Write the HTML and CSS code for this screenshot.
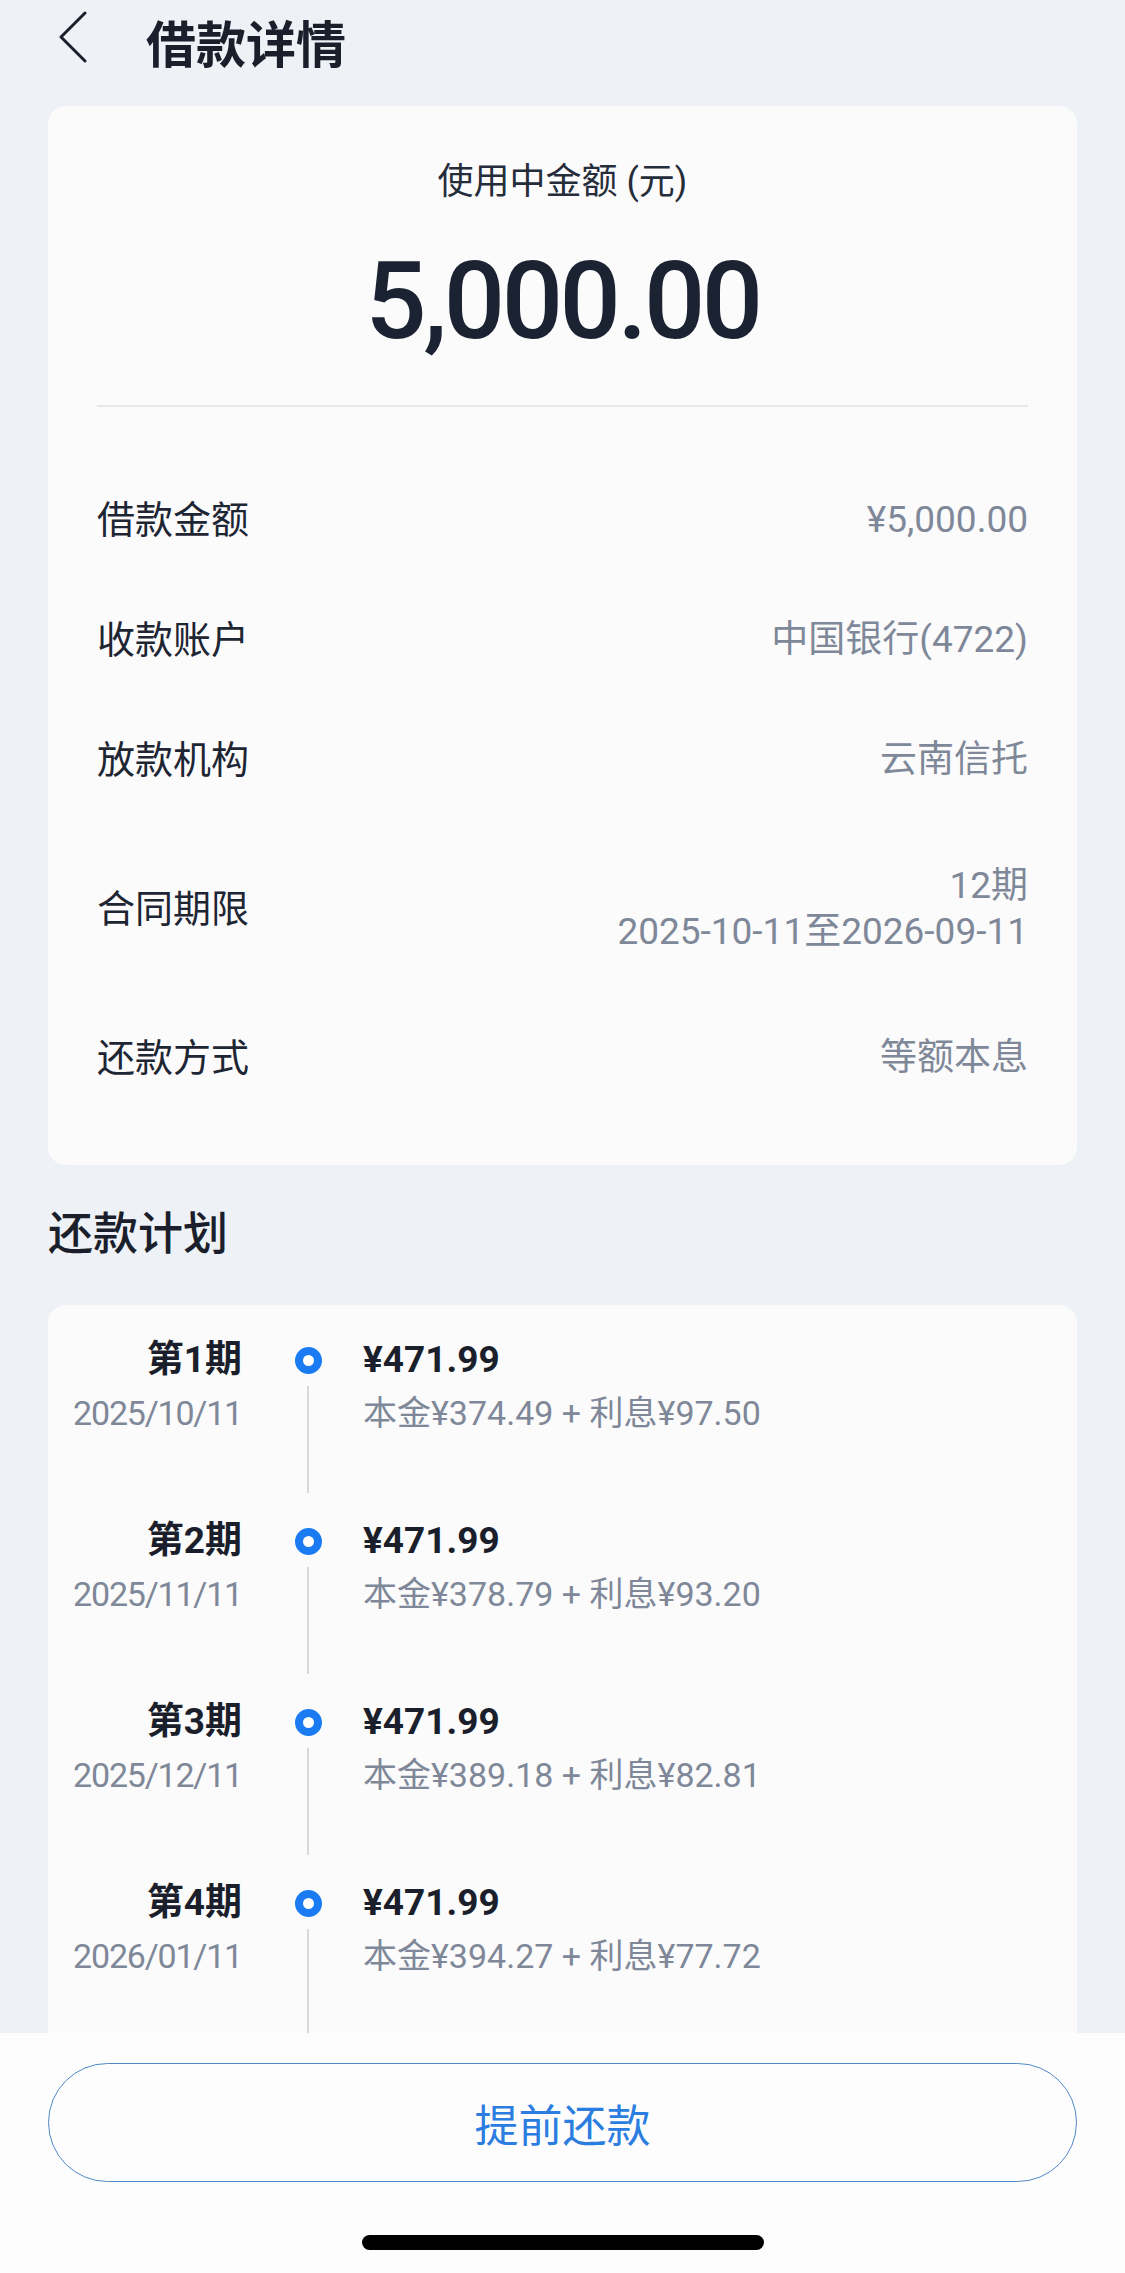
FILE: index.html
```
<!DOCTYPE html>
<html lang="zh-CN">
<head>
  <meta charset="UTF-8" />
  <meta name="viewport" content="width=device-width, initial-scale=1.0"/>
  <title>借款详情</title>
  <link rel="stylesheet" href="styles.css">
</head>
<body>
  <div class="topbar">
    <svg class="back" width="30" height="52" viewBox="0 0 30 52">
      <path d="M27 2 L3 26 L27 50" fill="none" stroke="#1a1f2b" stroke-width="3" stroke-linecap="round" stroke-linejoin="round"/>
    </svg>
    <h1>借款详情</h1>
  </div>

  <div class="card summary">
    <p class="summary-label">使用中金额 (元)</p>
    <p class="summary-amount">5,000.00</p>
    <div class="divider"></div>

    <div class="info-list">
      <div class="info-row">
        <span class="info-label">借款金额</span>
        <span class="info-value">¥5,000.00</span>
      </div>
      <div class="info-row">
        <span class="info-label">收款账户</span>
        <span class="info-value">中国银行(4722)</span>
      </div>
      <div class="info-row">
        <span class="info-label">放款机构</span>
        <span class="info-value">云南信托</span>
      </div>
      <div class="info-row info-row-tall">
        <span class="info-label">合同期限</span>
        <span class="info-value">12期<br>2025-10-11至2026-09-11</span>
      </div>
      <div class="info-row">
        <span class="info-label">还款方式</span>
        <span class="info-value">等额本息</span>
      </div>
    </div>
  </div>

  <h2 class="section-title">还款计划</h2>

  <div class="card plan">
    <div class="plan-item">
      <div class="period">
        <div class="period-no">第1期</div>
        <div class="period-date">2025/10/11</div>
      </div>
      <div class="axis"><span class="dot"></span><span class="axis-line"></span></div>
      <div class="detail">
        <div class="amount">¥471.99</div>
        <div class="breakdown">本金¥374.49 + 利息¥97.50</div>
      </div>
    </div>
    <div class="plan-item">
      <div class="period">
        <div class="period-no">第2期</div>
        <div class="period-date">2025/11/11</div>
      </div>
      <div class="axis"><span class="dot"></span><span class="axis-line"></span></div>
      <div class="detail">
        <div class="amount">¥471.99</div>
        <div class="breakdown">本金¥378.79 + 利息¥93.20</div>
      </div>
    </div>
    <div class="plan-item">
      <div class="period">
        <div class="period-no">第3期</div>
        <div class="period-date">2025/12/11</div>
      </div>
      <div class="axis"><span class="dot"></span><span class="axis-line"></span></div>
      <div class="detail">
        <div class="amount">¥471.99</div>
        <div class="breakdown">本金¥389.18 + 利息¥82.81</div>
      </div>
    </div>
    <div class="plan-item">
      <div class="period">
        <div class="period-no">第4期</div>
        <div class="period-date">2026/01/11</div>
      </div>
      <div class="axis"><span class="dot"></span><span class="axis-line"></span></div>
      <div class="detail">
        <div class="amount">¥471.99</div>
        <div class="breakdown">本金¥394.27 + 利息¥77.72</div>
      </div>
    </div>
  </div>

  <div class="footer">
    <button class="repay-btn">提前还款</button>
    <div class="home-bar"></div>
  </div>
</body>
</html>
```

FILE: styles.css
```
body {
  margin: 0;
  padding-bottom: 240px;
  background: #eef1f6;
  font-family: Roboto, "Noto Sans CJK SC", sans-serif;
  color: #1e2533;
}
p, h1, h2 {
  margin: 0;
}

.topbar {
  display: flex;
  align-items: center;
  height: 82px;
  padding-left: 58px;
  margin-bottom: 24px;
}
.back {
  margin-bottom: 8px;
}
.topbar h1 {
  margin-left: 58px;
  font-size: 50px;
  font-weight: 700;
  color: #1a1f2b;
}

.card {
  margin: 0 48px;
  background: #fbfbfc;
  border-radius: 18px;
}
.summary {
  padding: 51px 49px 47px;
}
.summary-label {
  text-align: center;
  font-size: 36px;
  line-height: 50px;
  color: #262d3a;
}
.summary-amount {
  margin-top: 34px;
  text-align: center;
  font-size: 108px;
  font-weight: 500;
  line-height: 120px;
  letter-spacing: -3.5px;
  color: #1b2232;
}
.divider {
  margin-top: 44px;
  height: 2px;
  background: #e6e8ec;
}
.info-list {
  margin-top: 53px;
}
.info-row {
  display: flex;
  justify-content: space-between;
  align-items: center;
  padding: 37px 0;
  line-height: 46px;
}
.info-row-tall {
  padding: 43px 0;
}
.info-label {
  font-size: 38px;
  color: #1e2533;
}
.info-value {
  font-size: 37px;
  text-align: right;
  color: #7f8898;
}

.section-title {
  margin: 40px 48px;
  font-size: 45px;
  font-weight: 500;
  line-height: 60px;
  color: #1a1f2b;
}

.plan {
  padding-top: 30px;
}
.plan-item {
  display: flex;
  height: 181px;
}
.period {
  width: 194px;
  text-align: right;
}
.period-no, .amount {
  font-size: 37px;
  font-weight: 700;
  line-height: 50px;
  color: #1a1f2b;
}
.period-date, .breakdown {
  font-size: 34px;
  line-height: 56px;
  color: #7f8898;
}
.period-date {
  letter-spacing: -1.2px;
}
.axis {
  display: flex;
  flex-direction: column;
  align-items: center;
  width: 60px;
  margin: 0 25px 0 36px;
}
.dot {
  box-sizing: border-box;
  width: 27px;
  height: 27px;
  margin-top: 11.5px;
  border: 8.5px solid #1a7bf2;
  border-radius: 50%;
  background: #fff;
}
.axis-line {
  width: 2px;
  height: 107px;
  margin-top: 12px;
  background: #d5d8dd;
}

.footer {
  position: fixed;
  left: 0;
  right: 0;
  bottom: 0;
  height: 240px;
  box-sizing: border-box;
  padding: 30px 48px 0;
  background: #fdfdfe;
}
.repay-btn {
  display: block;
  width: 100%;
  height: 119px;
  border: 1.5px solid #5189c6;
  border-radius: 60px;
  background: transparent;
  font-family: inherit;
  font-size: 44px;
  color: #2b7de0;
}
.home-bar {
  width: 402px;
  height: 15px;
  margin: 53px auto 0;
  border-radius: 8px;
  background: #000;
}
```
